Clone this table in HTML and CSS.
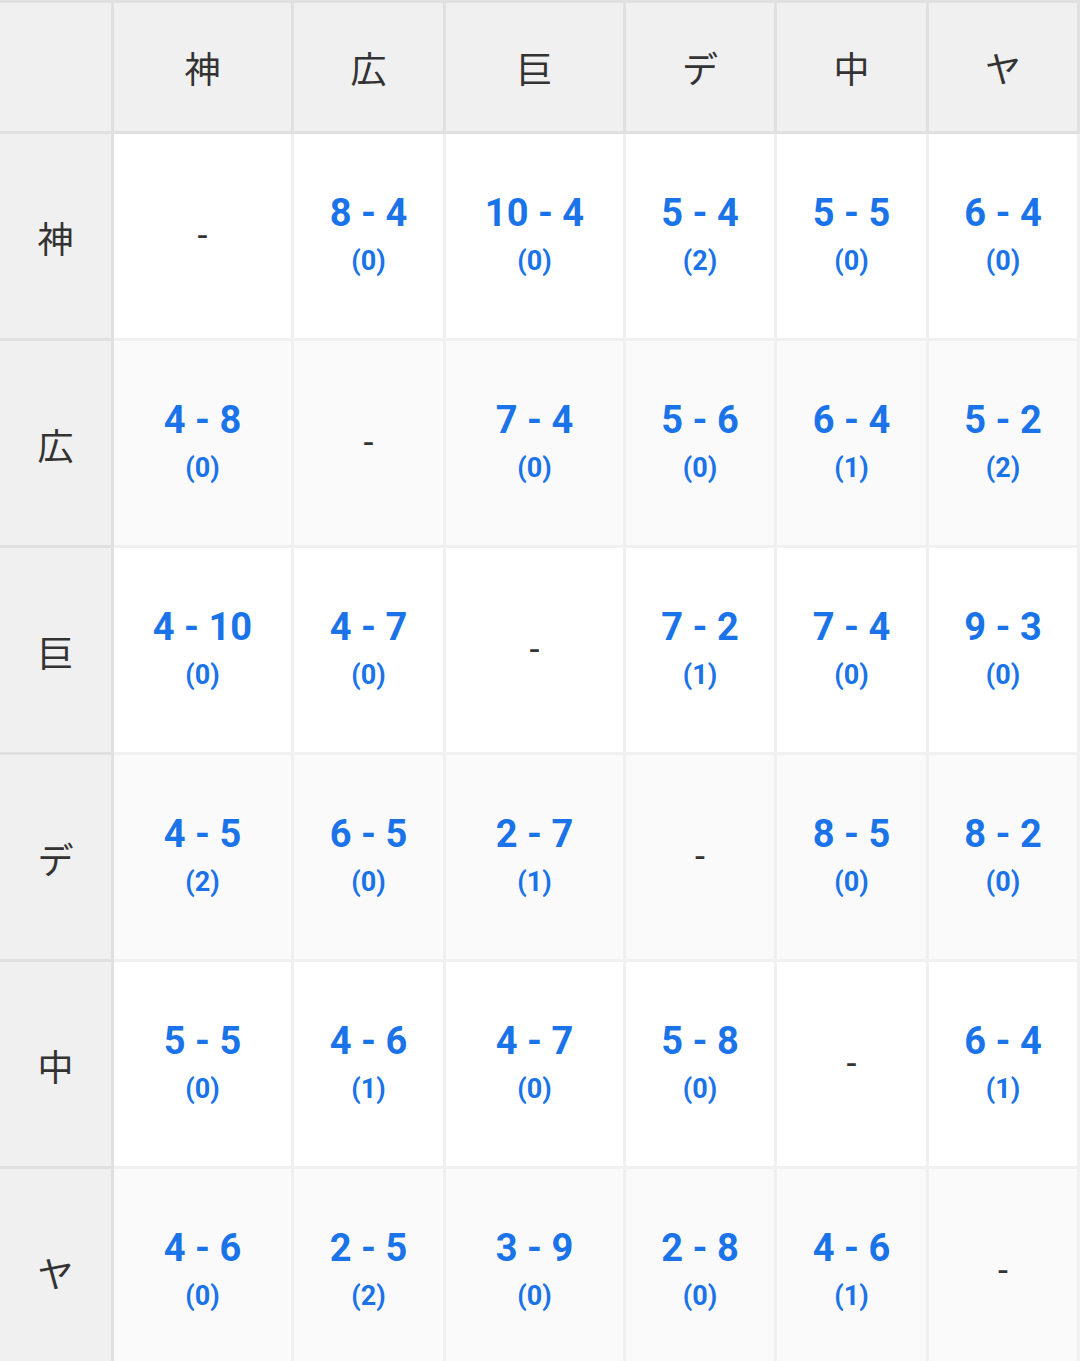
FILE: index.html
```html
<!DOCTYPE html>
<html lang="ja">
<head>
<meta charset="utf-8">
<title>対戦成績</title>
<link rel="stylesheet" href="styles.css">
</head>
<body>
<div class="grid">
  <div class="cell head corner"></div>
  <div class="cell head">神</div>
  <div class="cell head">広</div>
  <div class="cell head">巨</div>
  <div class="cell head">デ</div>
  <div class="cell head">中</div>
  <div class="cell head">ヤ</div>

  <div class="cell rowhead">神</div>
  <div class="cell body odd"><span class="dash">-</span></div>
  <div class="cell body odd"><span class="score">8 - 4</span><span class="draw">(0)</span></div>
  <div class="cell body odd"><span class="score">10 - 4</span><span class="draw">(0)</span></div>
  <div class="cell body odd"><span class="score">5 - 4</span><span class="draw">(2)</span></div>
  <div class="cell body odd"><span class="score">5 - 5</span><span class="draw">(0)</span></div>
  <div class="cell body odd"><span class="score">6 - 4</span><span class="draw">(0)</span></div>

  <div class="cell rowhead">広</div>
  <div class="cell body even"><span class="score">4 - 8</span><span class="draw">(0)</span></div>
  <div class="cell body even"><span class="dash">-</span></div>
  <div class="cell body even"><span class="score">7 - 4</span><span class="draw">(0)</span></div>
  <div class="cell body even"><span class="score">5 - 6</span><span class="draw">(0)</span></div>
  <div class="cell body even"><span class="score">6 - 4</span><span class="draw">(1)</span></div>
  <div class="cell body even"><span class="score">5 - 2</span><span class="draw">(2)</span></div>

  <div class="cell rowhead">巨</div>
  <div class="cell body odd"><span class="score">4 - 10</span><span class="draw">(0)</span></div>
  <div class="cell body odd"><span class="score">4 - 7</span><span class="draw">(0)</span></div>
  <div class="cell body odd"><span class="dash">-</span></div>
  <div class="cell body odd"><span class="score">7 - 2</span><span class="draw">(1)</span></div>
  <div class="cell body odd"><span class="score">7 - 4</span><span class="draw">(0)</span></div>
  <div class="cell body odd"><span class="score">9 - 3</span><span class="draw">(0)</span></div>

  <div class="cell rowhead">デ</div>
  <div class="cell body even"><span class="score">4 - 5</span><span class="draw">(2)</span></div>
  <div class="cell body even"><span class="score">6 - 5</span><span class="draw">(0)</span></div>
  <div class="cell body even"><span class="score">2 - 7</span><span class="draw">(1)</span></div>
  <div class="cell body even"><span class="dash">-</span></div>
  <div class="cell body even"><span class="score">8 - 5</span><span class="draw">(0)</span></div>
  <div class="cell body even"><span class="score">8 - 2</span><span class="draw">(0)</span></div>

  <div class="cell rowhead">中</div>
  <div class="cell body odd"><span class="score">5 - 5</span><span class="draw">(0)</span></div>
  <div class="cell body odd"><span class="score">4 - 6</span><span class="draw">(1)</span></div>
  <div class="cell body odd"><span class="score">4 - 7</span><span class="draw">(0)</span></div>
  <div class="cell body odd"><span class="score">5 - 8</span><span class="draw">(0)</span></div>
  <div class="cell body odd"><span class="dash">-</span></div>
  <div class="cell body odd"><span class="score">6 - 4</span><span class="draw">(1)</span></div>

  <div class="cell rowhead">ヤ</div>
  <div class="cell body even"><span class="score">4 - 6</span><span class="draw">(0)</span></div>
  <div class="cell body even"><span class="score">2 - 5</span><span class="draw">(2)</span></div>
  <div class="cell body even"><span class="score">3 - 9</span><span class="draw">(0)</span></div>
  <div class="cell body even"><span class="score">2 - 8</span><span class="draw">(0)</span></div>
  <div class="cell body even"><span class="score">4 - 6</span><span class="draw">(1)</span></div>
  <div class="cell body even"><span class="dash">-</span></div>
</div>
</body>
</html>
```

FILE: styles.css
```css
html, body {
  margin: 0;
  padding: 0;
  overflow: hidden;
  background: #ffffff;
}

body {
  font-family: Roboto, "Noto Sans CJK JP", sans-serif;
}

.grid {
  display: grid;
  width: 1080px;
  grid-template-columns: 114px 180px 152px 180px 151px 152px 151px;
  grid-template-rows: 134px;
  grid-auto-rows: 207px;
}

.cell {
  box-sizing: border-box;
  display: flex;
  flex-direction: column;
  align-items: center;
  justify-content: center;
  border-right: 3px solid #f0f0f0;
  border-bottom: 3px solid #f0f0f0;
}

.head {
  background: #f0f0f0;
  border-top: 3px solid #e0e0e0;
  border-right-color: #e0e0e0;
  border-bottom-color: #e0e0e0;
}

.head,
.rowhead {
  font-family: "Noto Sans CJK JP", sans-serif;
  font-size: 36px;
  color: #333333;
}

.rowhead {
  background: #f0f0f0;
  border-right-color: #e0e0e0;
  border-bottom-color: #e0e0e0;
  padding-top: 2px;
}

.odd {
  background: #ffffff;
}

.even {
  background: #fafafa;
}

.score {
  font-family: Roboto, sans-serif;
  font-weight: 700;
  font-size: 38px;
  line-height: 52px;
  color: #1a73e8;
  white-space: pre;
}

.draw {
  font-family: Roboto, sans-serif;
  font-weight: 700;
  font-size: 27px;
  line-height: 44px;
  color: #1a73e8;
  padding-bottom: 2px;
}

.dash {
  font-family: Roboto, sans-serif;
  font-size: 36px;
  line-height: 40px;
  color: #333333;
}
```
